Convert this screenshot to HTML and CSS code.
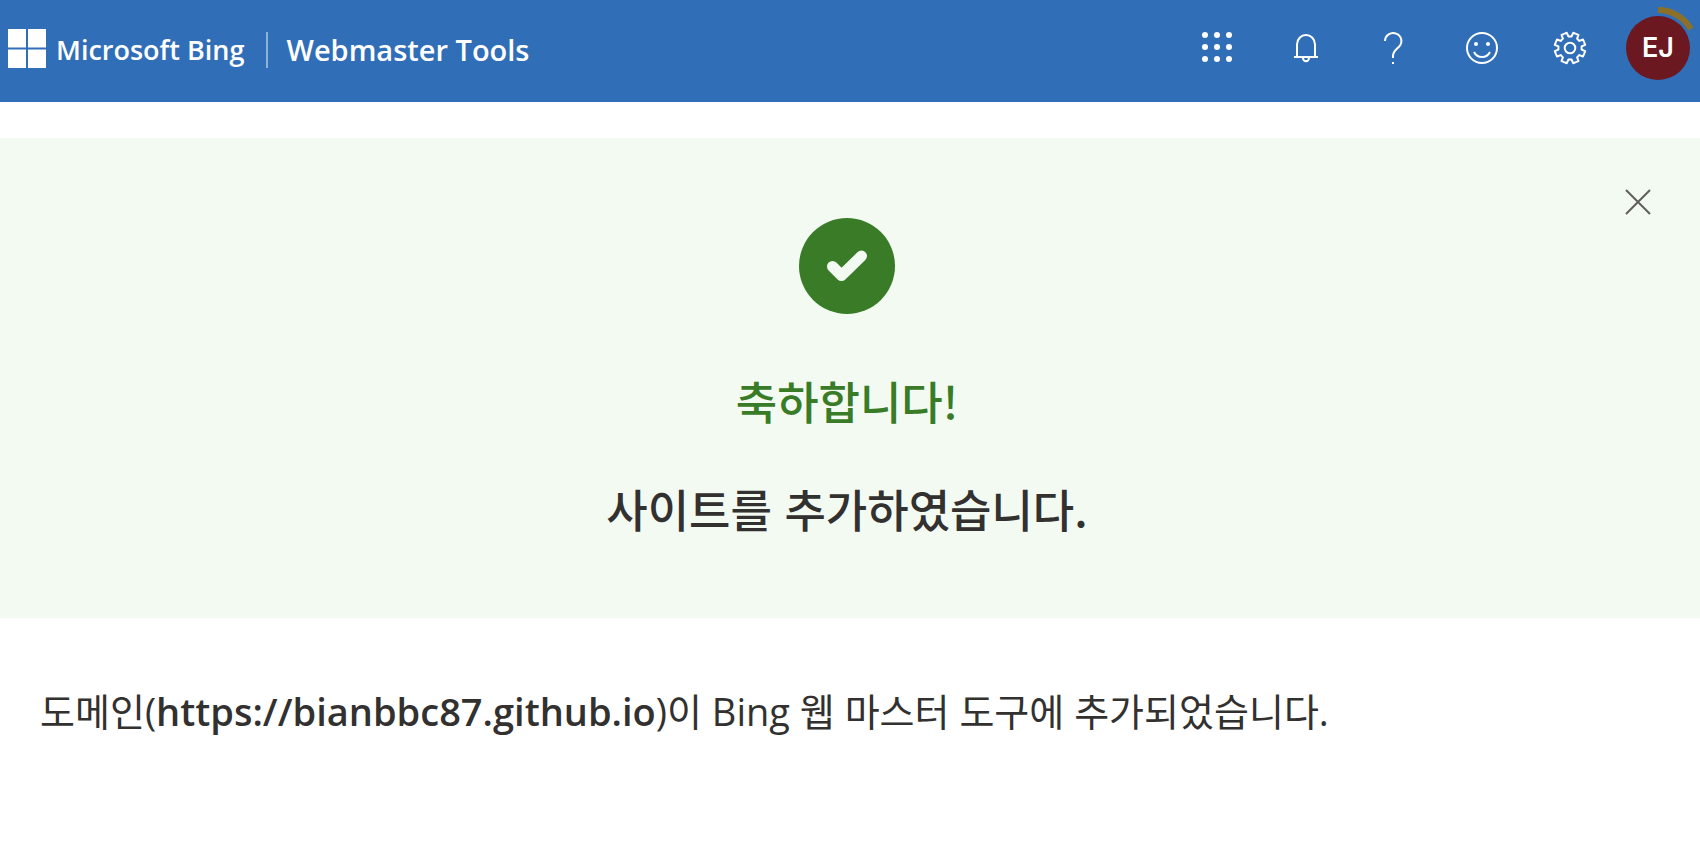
FILE: index.html
```html
<!DOCTYPE html>
<html lang="ko">
<head>
<meta charset="utf-8">
<meta name="viewport" content="width=device-width, initial-scale=1">
<title>Microsoft Bing Webmaster Tools</title>
<link rel="stylesheet" href="styles.css">
</head>
<body>
<header class="topbar">
  <a class="brand" href="#">
    <svg class="brand-logo" viewBox="0 0 38 39" aria-hidden="true"><path d="M0 0h18v18.500H0zM20 0h18v18.500H20zM0 20.500h18V39H0zM20 20.500h18V39H20z"/></svg>
    <span class="brand-name">Microsoft Bing</span>
  </a>
  <span class="divider"></span>
  <span class="product">Webmaster Tools</span>
  <nav class="actions" aria-label="도구">
    <button class="action" type="button" aria-label="앱">
      <svg class="icon" viewBox="0 0 36 36"><g fill="currentColor" stroke="none"><circle cx="5" cy="5" r="3"/><circle cx="17" cy="5" r="3"/><circle cx="29" cy="5" r="3"/><circle cx="5" cy="17" r="3"/><circle cx="17" cy="17" r="3"/><circle cx="29" cy="17" r="3"/><circle cx="5" cy="29" r="3"/><circle cx="17" cy="29" r="3"/><circle cx="29" cy="29" r="3"/></g></svg>
    </button>
    <button class="action" type="button" aria-label="알림">
      <svg class="icon" viewBox="0 0 36 36"><path d="M6 27h24M9 27V14.500a9 9.500 0 0 1 18 0V27M15 28a3 3.200 0 0 0 6 0"/></svg>
    </button>
    <button class="action" type="button" aria-label="도움말">
      <svg class="icon" viewBox="0 0 36 36"><path d="M9 11a8.200 8 0 1 1 14.200 5.500C20.500 19.300 17 21.500 17 26V28M17 32v2"/></svg>
    </button>
    <button class="action" type="button" aria-label="피드백">
      <svg class="icon" viewBox="0 0 36 36"><circle cx="18" cy="18" r="15"/><path d="M10 22q2.500 5 8 5t8-5"/><g fill="currentColor" stroke="none"><circle cx="12" cy="14" r="2"/><circle cx="24" cy="14" r="2"/></g></svg>
    </button>
    <button class="action" type="button" aria-label="설정">
      <svg class="icon" viewBox="0 0 36 36"><defs><path id="notch" d="M12.100 3.900L14.800 2.800L16.400 6.400H19.600L21.200 2.800L23.900 3.900" stroke-linejoin="round"/></defs><circle cx="18" cy="18" r="5.300"/><use href="#notch"/><use href="#notch" transform="rotate(45 18 18)"/><use href="#notch" transform="rotate(90 18 18)"/><use href="#notch" transform="rotate(135 18 18)"/><use href="#notch" transform="rotate(180 18 18)"/><use href="#notch" transform="rotate(225 18 18)"/><use href="#notch" transform="rotate(270 18 18)"/><use href="#notch" transform="rotate(315 18 18)"/></svg>
    </button>
    <button class="account" type="button" aria-label="계정 EJ">
      <svg class="account-ring" viewBox="0 0 84 84" aria-hidden="true"><path d="M42 4A38 38 0 0 1 74.900 23"/></svg>
      <span class="avatar">EJ</span>
    </button>
  </nav>
</header>
<main>
  <section class="banner">
    <button class="close" type="button" aria-label="닫기"><svg class="close-icon" viewBox="0 0 26 26"><path d="M1 1l24 24M25 1L1 25"/></svg></button>
    <svg class="check" viewBox="0 0 96 96" aria-hidden="true"><circle cx="48" cy="48" r="48"/><path d="M33.500 48.500l9 9L62.500 38"/></svg>
    <h1 class="congrats">축하합니다!</h1>
    <h2 class="status">사이트를 추가하였습니다.</h2>
  </section>
  <p class="message">도메인(<strong class="domain">https://bianbbc87.github.io</strong>)이 Bing 웹 마스터 도구에 추가되었습니다.</p>
</main>
</body>
</html>
```
FILE: styles.css
```css
* { box-sizing: border-box; }
body {
  margin: 0;
  background: #fff;
  color: #323130;
  font-family: "Open Sans", "Noto Sans CJK KR", sans-serif;
}
button {
  padding: 0;
  border: 0;
  background: none;
  color: inherit;
  font: inherit;
  cursor: pointer;
}
.topbar {
  display: flex;
  align-items: center;
  height: 102px;
  padding: 0 0 6px 8px;
  background: #316eb8;
  color: #fff;
  font-size: 29px;
  font-weight: 600;
  line-height: 40px;
  white-space: nowrap;
}
.brand {
  display: flex;
  align-items: center;
  gap: 10px;
  color: inherit;
  text-decoration: none;
}
.brand-logo { width: 38px; height: 39px; fill: #fff; }
.brand-name { padding-top: 4px; font-size: 27px; }
.divider {
  width: 2px;
  height: 36px;
  margin: 4px 18px 0 22px;
  background: #8fb1da;
}
.product { padding-top: 4px; }
.actions {
  display: flex;
  align-items: center;
  margin-left: auto;
}
.action {
  display: grid;
  place-items: center;
  width: 88px;
  height: 88px;
}
.icon {
  width: 36px;
  height: 36px;
  fill: none;
  stroke: currentColor;
  stroke-width: 2;
}
.account {
  position: relative;
  display: grid;
  place-items: center;
  width: 84px;
  height: 84px;
  margin-left: 2px;
}
.account-ring {
  position: absolute;
  inset: 0;
  fill: none;
  stroke: #8d7027;
  stroke-width: 6;
}
.avatar {
  display: grid;
  place-items: center;
  width: 64px;
  height: 64px;
  border-radius: 50%;
  background: #6b1820;
  font-family: Inter, sans-serif;
  font-size: 27px;
}
.banner {
  position: relative;
  display: flex;
  flex-direction: column;
  align-items: center;
  margin-top: 36px;
  padding: 80px 6px 77px 0;
  background: #f2faf2;
}
.close {
  position: absolute;
  top: 40px;
  right: 38px;
  display: grid;
  place-items: center;
  width: 48px;
  height: 48px;
}
.close-icon { width: 26px; height: 26px; stroke: #605e5c; stroke-width: 2; }
.check { width: 96px; height: 96px; fill: #397b27; }
.check path {
  fill: none;
  stroke: #f2faf2;
  stroke-width: 11;
  stroke-linecap: round;
  stroke-linejoin: round;
}
.congrats, .status {
  margin: 0;
  font-family: "Noto Sans CJK KR", sans-serif;
  font-size: 45px;
  font-weight: 500;
  line-height: 64px;
}
.congrats { margin-top: 55px; color: #397b27; }
.status { margin-top: 44px; }
.message {
  margin: 0;
  padding: 67px 40px;
  font-size: 38px;
  line-height: 52px;
}
.domain { font-weight: 600; }
```
